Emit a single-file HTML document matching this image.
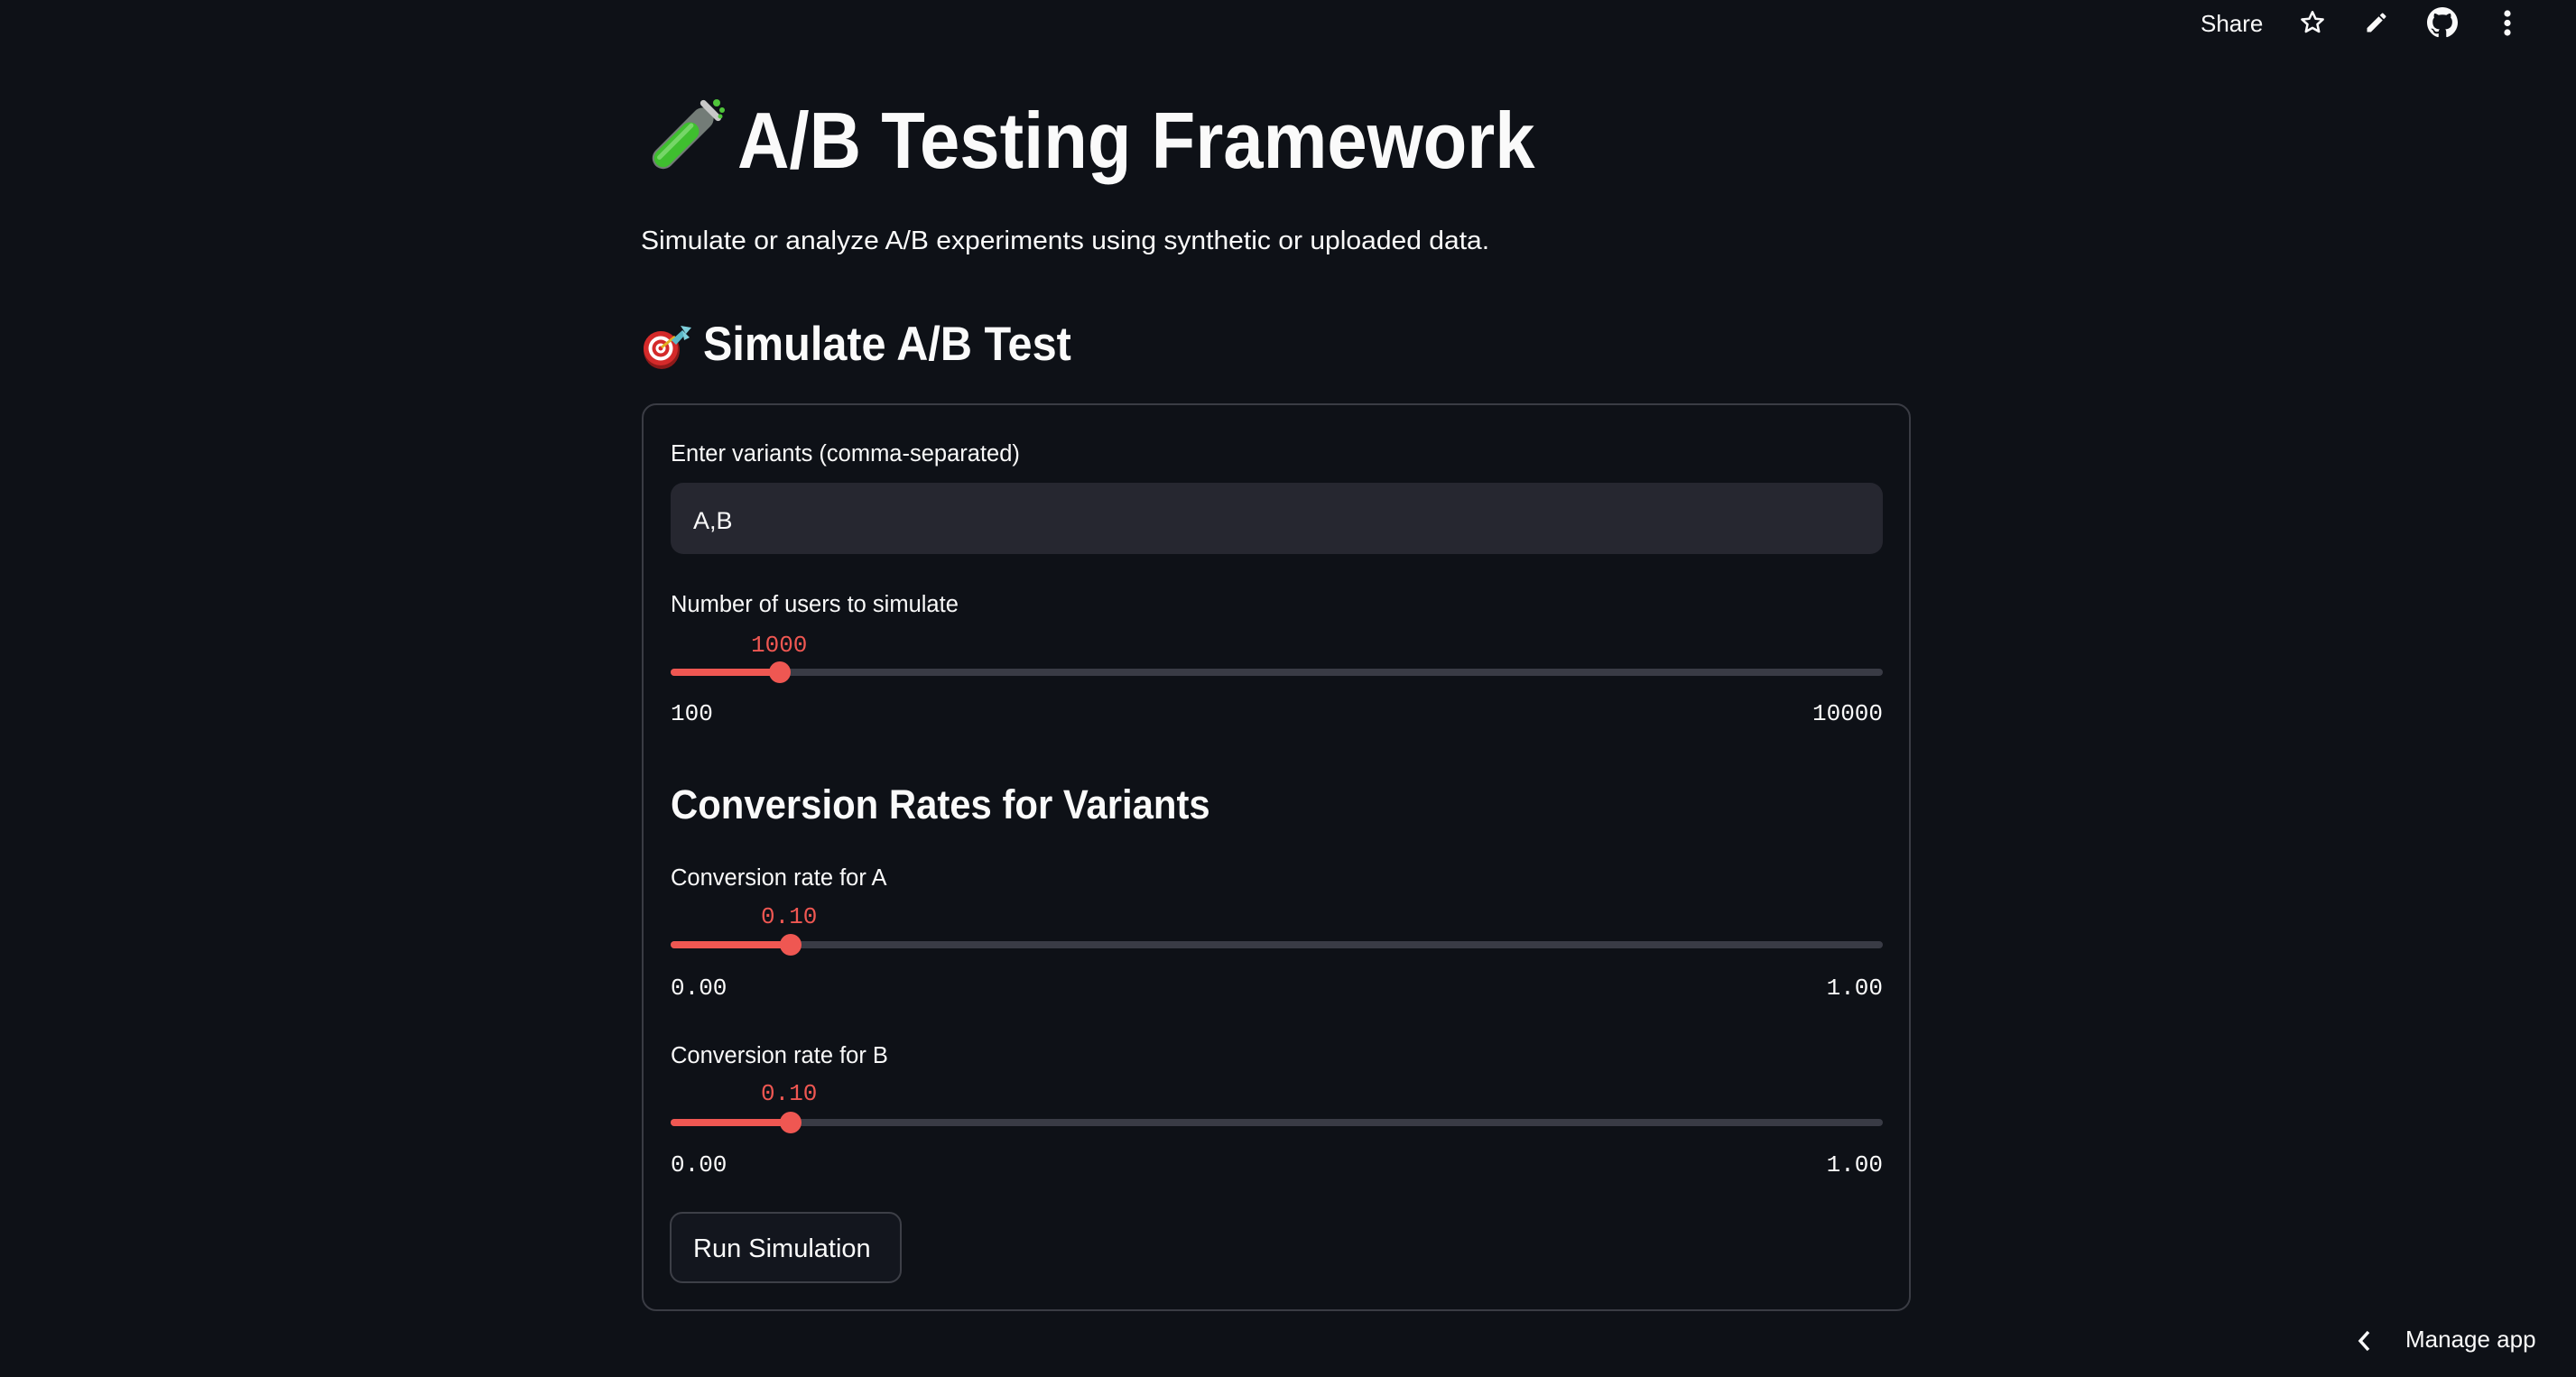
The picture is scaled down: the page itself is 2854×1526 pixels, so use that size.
<!DOCTYPE html>
<html><head><meta charset="utf-8"><style>
*{margin:0;padding:0;box-sizing:border-box}
html,body{width:2854px;height:1526px;background:#0e1117;overflow:hidden}
body{position:relative;font-family:"Liberation Sans",sans-serif;color:#fafafa}
.t{position:absolute;line-height:1;white-space:nowrap}
.m{font-family:"Liberation Mono",monospace}
.red{color:#ef5752}
.track{position:absolute;left:743px;width:1343px;height:8px;border-radius:4px;background:#393b45}
.fill{position:absolute;left:0;top:0;height:8px;border-radius:4px;background:#ef5752}
.thumb{position:absolute;width:24px;height:24px;border-radius:50%;background:#ef5752}
.a{position:absolute}
</style></head><body>
<!-- top bar -->
<div class="t" style="left:2438px;top:13px;font-size:26px">Share</div>
<svg class="a" style="left:2546px;top:9px" width="32" height="32" viewBox="0 0 24 24"><path d="M12 3.2l2.6 5.6 6.1.6-4.6 4.1 1.3 6-5.4-3.1-5.4 3.1 1.3-6-4.6-4.1 6.1-.6z" fill="none" stroke="#fafafa" stroke-width="1.9" stroke-linejoin="round"/></svg>
<svg class="a" style="left:2619px;top:11px" width="28" height="28" viewBox="0 0 24 24"><path d="M3 17.3V21h3.7L17.8 9.9l-3.7-3.7zM20.7 7c.4-.4.4-1 0-1.4l-2.3-2.3c-.4-.4-1-.4-1.4 0l-1.8 1.8 3.7 3.7z" fill="#fafafa"/></svg>
<svg class="a" style="left:2689px;top:8px" width="34" height="34" viewBox="0 0 16 16"><path fill="#fafafa" d="M8 0C3.58 0 0 3.58 0 8c0 3.54 2.290 6.53 5.47 7.59.4.07.55-.17.55-.38 0-.19-.01-.82-.01-1.490-2.01.37-2.53-.49-2.69-.94-.09-.23-.48-.94-.82-1.13-.28-.15-.68-.52-.01-.53.63-.01 1.08.58 1.23.82.72 1.21 1.870.87 2.33.66.07-.52.28-.87.51-1.07-1.78-.2-3.64-.89-3.64-3.95 0-.87.31-1.59.82-2.15-.08-.2-.36-1.02.08-2.12 0 0 .67-.21 2.2.82.64-.18 1.32-.27 2-.27.68 0 1.36.09 2 .27 1.53-1.04 2.2-.82 2.2-.82.44 1.1.16 1.92.08 2.12.51.56.82 1.27.82 2.15 0 3.07-1.87 3.75-3.65 3.95.29.25.54.73.54 1.48 0 1.07-.01 1.93-.01 2.2 0 .21.15.46.55.38A8.013 8.013 0 0016 8c0-4.42-3.58-8-8-8z"/></svg>
<svg class="a" style="left:2770px;top:8px" width="16" height="36" viewBox="0 0 16 36"><circle cx="8" cy="7" r="3.6" fill="#fafafa"/><circle cx="8" cy="17.5" r="3.6" fill="#fafafa"/><circle cx="8" cy="28" r="3.6" fill="#fafafa"/></svg>

<!-- title -->
<svg class="a" style="left:706px;top:104px" width="100" height="100" viewBox="0 0 100 100">
<g transform="translate(50 50) rotate(45)">
<rect x="-12" y="-44" width="24" height="86" rx="12" fill="#d8e8d8" opacity="0.5"/>
<rect x="-10" y="-22" width="20" height="62" rx="10" fill="#3fbf2f"/>
<rect x="-6" y="-20" width="5" height="55" rx="2.5" fill="#8fe080" opacity="0.7"/>
<rect x="-15" y="-48" width="30" height="7" rx="3.5" fill="#c8c8c8"/>
</g>
<circle cx="88" cy="10" r="4" fill="#4fc43a"/><circle cx="94" cy="18" r="3" fill="#4fc43a"/><circle cx="92" cy="25" r="2.5" fill="#4fc43a"/>
</svg>
<div class="t" style="left:817px;top:112px;font-size:88px;font-weight:bold;transform:scaleX(0.905);transform-origin:left">A/B Testing Framework</div>
<div class="t" style="left:710px;top:253px;font-size:28.5px;transform:scaleX(1.054);transform-origin:left">Simulate or analyze A/B experiments using synthetic or uploaded data.</div>

<!-- h2 -->
<svg class="a" style="left:708px;top:355px" width="60" height="56" viewBox="0 0 60 56">
<ellipse cx="25" cy="33" rx="20" ry="21" fill="#8e1a1a"/>
<circle cx="24" cy="31" r="19" fill="#d42a2a"/><circle cx="24" cy="31" r="13.5" fill="#fff"/><circle cx="24" cy="31" r="9.5" fill="#d42a2a"/><circle cx="24" cy="31" r="5.5" fill="#fff"/><circle cx="24" cy="31" r="2.5" fill="#d42a2a"/>
<path d="M25 30 L40 18" stroke="#e0b020" stroke-width="3"/>
<path d="M36 22 L48 11 L52 15 L41 27z" fill="#5ab8c8"/><path d="M46 6 L58 8 L52 15z M48 11 L56 19 L50 22z" fill="#7fd0dc"/>
</svg>
<div class="t" style="left:779px;top:355px;font-size:53px;font-weight:bold;transform:scaleX(0.917);transform-origin:left">Simulate A/B Test</div>

<!-- container -->
<div class="a" style="left:711px;top:447px;width:1406px;height:1006px;border:2px solid #3a3c44;border-radius:16px"></div>

<div class="t" style="left:743px;top:491px;font-size:25.5px">Enter variants (comma-separated)</div>
<div class="a" style="left:743px;top:535px;width:1343px;height:79px;background:#262730;border-radius:14px"></div>
<div class="t" style="left:768px;top:564px;font-size:27px">A,B</div>

<div class="t" style="left:743px;top:658px;font-size:25.5px">Number of users to simulate</div>
<div class="t m red" style="left:832px;top:702px;font-size:26px">1000</div>
<div class="track" style="top:741px"><div class="fill" style="width:121px"></div></div>
<div class="thumb" style="left:852px;top:733px"></div>
<div class="t m" style="left:743px;top:778px;font-size:26px">100</div>
<div class="t m" style="left:1991px;top:778px;font-size:26px;width:95px;text-align:right">10000</div>

<div class="t" style="left:743px;top:869px;font-size:45px;font-weight:bold;transform:scaleX(0.93);transform-origin:left">Conversion Rates for Variants</div>

<div class="t" style="left:743px;top:961px;font-size:25.5px">Conversion rate for A</div>
<div class="t m red" style="left:843px;top:1003px;font-size:26px">0.10</div>
<div class="track" style="top:1043px"><div class="fill" style="width:133px"></div></div>
<div class="thumb" style="left:864px;top:1035px"></div>
<div class="t m" style="left:743px;top:1082px;font-size:26px">0.00</div>
<div class="t m" style="left:1986px;top:1082px;font-size:26px;width:100px;text-align:right">1.00</div>

<div class="t" style="left:743px;top:1158px;font-size:25.5px">Conversion rate for B</div>
<div class="t m red" style="left:843px;top:1199px;font-size:26px">0.10</div>
<div class="track" style="top:1240px"><div class="fill" style="width:133px"></div></div>
<div class="thumb" style="left:864px;top:1232px"></div>
<div class="t m" style="left:743px;top:1278px;font-size:26px">0.00</div>
<div class="t m" style="left:1986px;top:1278px;font-size:26px;width:100px;text-align:right">1.00</div>

<div class="a" style="left:742px;top:1343px;width:257px;height:79px;border:2px solid #3d3f47;border-radius:14px;background:#13161e"></div>
<div class="t" style="left:768px;top:1370px;font-size:29px">Run Simulation</div>

<!-- manage app -->
<svg class="a" style="left:2610px;top:1473px" width="20" height="26" viewBox="0 0 20 26"><path d="M14 3 L5 13 L14 23" fill="none" stroke="#fafafa" stroke-width="3.5"/></svg>
<div class="t" style="left:2665px;top:1471px;font-size:26px">Manage app</div>
</body></html>
